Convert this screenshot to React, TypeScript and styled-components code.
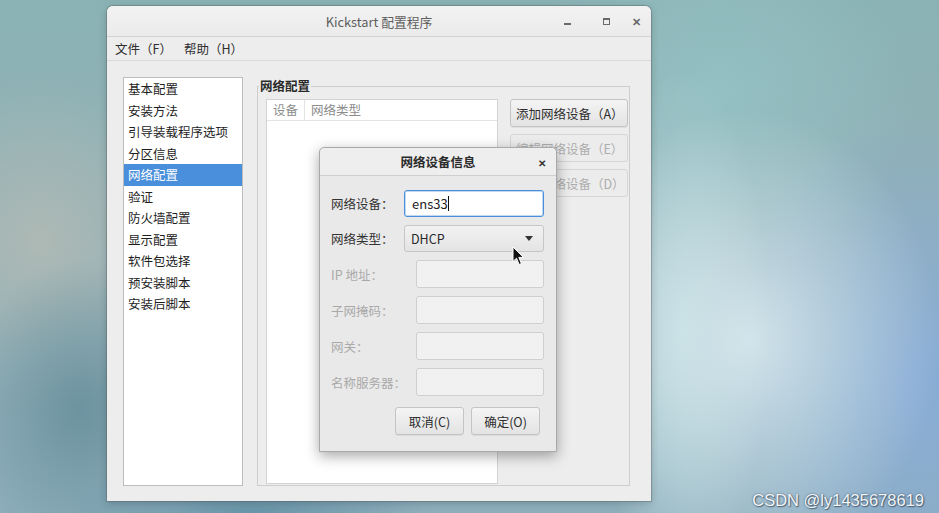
import styled, {createGlobalStyle, css} from "styled-components";

const sections = ['基本配置', '安装方法', '引导装载程序选项', '分区信息', '网络配置', '验证', '防火墙配置', '显示配置', '软件包选择', '预安装脚本', '安装后脚本']

const fields = [
    {label: '网络设备：', kind: 'entry', value: 'ens33'},
    {label: '网络类型：', kind: 'combo', value: 'DHCP'},
    {label: 'IP 地址：', kind: 'off', value: ''},
    {label: '子网掩码：', kind: 'off', value: ''},
    {label: '网关：', kind: 'off', value: ''},
    {label: '名称服务器：', kind: 'off', value: ''},
]

function App() {
    return (
        <Desktop>
            <GlobalStyle/>
            <MainWindow>
                <TitleBar>
                    <Title>Kickstart 配置程序</Title>
                    <Controls>
                        <CtrlMin/>
                        <CtrlMax/>
                        <CtrlClose>✕</CtrlClose>
                    </Controls>
                </TitleBar>
                <MenuBar>
                    <MenuItem>文件（F）</MenuItem>
                    <MenuItem>帮助（H）</MenuItem>
                </MenuBar>
                <Body>
                    <SectionList>
                        {sections.map(s => (
                            <SectionItem key={s} selected={s === '网络配置'}>{s}</SectionItem>
                        ))}
                    </SectionList>
                    <Frame>
                        <Legend>网络配置</Legend>
                        <FrameInner>
                            <DeviceTable>
                                <TableHead>
                                    <HeadCell>设备</HeadCell>
                                    <HeadCell last>网络类型</HeadCell>
                                </TableHead>
                            </DeviceTable>
                            <ActionColumn>
                                <ActionButton>添加网络设备（A）</ActionButton>
                                <ActionButton disabled>编辑网络设备（E）</ActionButton>
                                <ActionButton disabled>删除网络设备（D）</ActionButton>
                            </ActionColumn>
                        </FrameInner>
                    </Frame>
                </Body>
            </MainWindow>

            <Dialog>
                <DialogHeader>
                    <DialogTitle>网络设备信息</DialogTitle>
                    <DialogClose>✕</DialogClose>
                </DialogHeader>
                <DialogBody>
                    <FieldGrid>
                        {fields.map(f => (
                            <FieldRow key={f.label}>
                                <FieldLabel off={f.kind === 'off'}>{f.label}</FieldLabel>
                                {f.kind === 'entry' && (
                                    <Entry>{f.value}<Caret/></Entry>
                                )}
                                {f.kind === 'combo' && (
                                    <Combo>
                                        <span>{f.value}</span>
                                        <ComboArrow/>
                                    </Combo>
                                )}
                                {f.kind === 'off' && <EntryOff/>}
                            </FieldRow>
                        ))}
                    </FieldGrid>
                    <DialogButtons>
                        <DialogButton>取消(C)</DialogButton>
                        <DialogButton>确定(O)</DialogButton>
                    </DialogButtons>
                </DialogBody>
            </Dialog>

            <Pointer width="13" height="20" viewBox="0 0 13 20">
                <path d="M1 1 L1 15.5 L4.5 12.2 L7.2 18.5 L9.4 17.5 L6.8 11.4 L11.5 11.4 Z" fill="#111" stroke="#fff" strokeWidth="1"/>
            </Pointer>

            <Watermark>CSDN @ly1435678619</Watermark>
        </Desktop>
    )
}

export default App

const GlobalStyle = createGlobalStyle`
    html, body {
        margin: 0;
        padding: 0;
        overflow: hidden;
    }
    body {
        font-family: "Noto Sans CJK SC", "Noto Sans", sans-serif;
    }
`

const Desktop = styled.div`
    position: relative;
    width: 939px;
    height: 513px;
    overflow: hidden;
    background:
        radial-gradient(ellipse 190px 230px at 750px 340px, rgba(220, 236, 241, 0.85), rgba(220, 236, 241, 0) 100%),
        radial-gradient(ellipse 90px 260px at 680px 330px, rgba(192, 224, 228, 0.8), rgba(192, 224, 228, 0) 100%),
        radial-gradient(ellipse 220px 260px at 920px 380px, rgba(136, 172, 216, 0.95), rgba(136, 172, 216, 0) 100%),
        radial-gradient(ellipse 180px 60px at 250px 513px, rgba(100, 146, 166, 0.9), rgba(100, 146, 166, 0) 100%),
        radial-gradient(ellipse 120px 150px at 80px 410px, rgba(104, 144, 156, 0.9), rgba(104, 144, 156, 0) 100%),
        radial-gradient(ellipse 150px 170px at 40px 240px, rgba(176, 186, 180, 0.9), rgba(176, 186, 180, 0) 100%),
        radial-gradient(ellipse 200px 180px at 720px 90px, rgba(150, 196, 198, 0.8), rgba(150, 196, 198, 0) 100%),
        linear-gradient(180deg, #8ab2b4 0%, #93b0b8 50%, #8eaebc 100%);
`

const MainWindow = styled.div`
    position: absolute;
    left: 107px;
    top: 6px;
    width: 544px;
    height: 495px;
    display: flex;
    flex-direction: column;
    background: #ededed;
    border-radius: 6px 6px 0 0;
    box-shadow: 0 0 0 1px rgba(80, 90, 90, 0.35), 0 2px 8px rgba(0, 0, 0, 0.2);
    overflow: hidden;
`

const TitleBar = styled.div`
    position: relative;
    height: 30px;
    flex-shrink: 0;
    display: flex;
    align-items: center;
    justify-content: center;
    background: linear-gradient(#f2f2f2, #ebebeb);
    border-bottom: 1px solid #d4d4d4;
`

const Title = styled.div`
    font-size: 12.8px;
    color: #5e5e5e;
`

const Controls = styled.div`
    position: absolute;
    right: 0;
    top: 0;
    height: 30px;
    display: flex;
    align-items: center;
`

const ctrl = css`
    width: 30px;
    height: 30px;
    display: flex;
    justify-content: center;
    align-items: center;
    color: #6a6a6a;
`

const CtrlMin = styled.div`
    ${ctrl};
    margin-right: 9px;
    &::after {
        content: '';
        width: 7px;
        height: 2px;
        margin-top: 6px;
        background: #6a6a6a;
    }
`

const CtrlMax = styled.div`
    ${ctrl};
    &::after {
        content: '';
        width: 5px;
        height: 4px;
        border: 1.5px solid #6a6a6a;
        border-top-width: 2px;
    }
`

const CtrlClose = styled.div`
    ${ctrl};
    font-size: 11px;
    font-weight: 700;
`

const MenuBar = styled.div`
    height: 23px;
    flex-shrink: 0;
    display: flex;
    align-items: center;
    padding-left: 6px;
    gap: 8px;
    border-bottom: 1px solid #dadada;
`

const MenuItem = styled.div`
    font-size: 12.5px;
    color: #2e2e2e;
    padding: 0 2px;
`

const Body = styled.div`
    flex: 1;
    display: flex;
    gap: 14px;
    padding: 16px 21px 15px 16px;
    min-height: 0;
`

const SectionList = styled.div`
    width: 118px;
    background: #fff;
    border: 1px solid #bdbdbd;
    display: flex;
    flex-direction: column;
`

const SectionItem = styled.div<{ selected?: boolean }>`
    height: 21.5px;
    line-height: 21.5px;
    padding-left: 4px;
    font-size: 12.5px;
    color: #1e1e1e;
    white-space: nowrap;

    ${props => props.selected && css`
        background: #4a8fdb;
        color: #fff;
    `}
`

const Frame = styled.fieldset`
    flex: 1;
    margin: 0;
    padding: 3px 1px 1px 8px;
    border: 1px solid #cdcdcd;
    display: flex;
    min-width: 0;
`

const Legend = styled.legend`
    margin-left: -7px;
    padding: 0 1px;
    font-size: 12.5px;
    font-weight: 700;
    color: #2a2a2a;
    line-height: 18px;
`

const FrameInner = styled.div`
    flex: 1;
    display: flex;
    gap: 12px;
    padding-top: 1px;
`

const DeviceTable = styled.div`
    width: 230px;
    background: #fff;
    border: 1px solid #d3d3d3;
    display: flex;
    flex-direction: column;
`

const TableHead = styled.div`
    display: flex;
    height: 20px;
    border-bottom: 1px solid #e3e3e3;
`

const HeadCell = styled.div<{ last?: boolean }>`
    font-size: 12.5px;
    color: #8c8c8c;
    line-height: 20px;
    padding: 0 6px;
    border-right: ${props => props.last ? 'none' : '1px solid #e3e3e3'};
    flex: ${props => props.last ? 1 : 'none'};
`

const ActionColumn = styled.div`
    display: flex;
    flex-direction: column;
    gap: 7px;
    width: 118px;
`

const buttonLook = css`
    height: 28px;
    box-sizing: border-box;
    border: 1px solid #c4c4c4;
    border-radius: 3px;
    background: linear-gradient(#f4f4f4, #e3e3e3);
    box-shadow: 0 1px 0 rgba(0, 0, 0, 0.06);
    font-family: "Noto Sans CJK SC", "Noto Sans", sans-serif;
    font-size: 12.5px;
    color: #2e2e2e;
    padding: 0;
`

const ActionButton = styled.button`
    ${buttonLook};
    width: 118px;
    text-align: left;
    padding-left: 5px;
    white-space: nowrap;

    &:disabled {
        background: #ececec;
        border-color: #d6d6d6;
        color: #adadad;
        box-shadow: none;
    }
`

const Dialog = styled.div`
    position: absolute;
    left: 319px;
    top: 147px;
    width: 238px;
    height: 305px;
    box-sizing: border-box;
    display: flex;
    flex-direction: column;
    background: #e9e9e9;
    border: 1px solid #a9a9a9;
    border-radius: 5px 5px 0 0;
    box-shadow: 0 4px 14px rgba(0, 0, 0, 0.35);
`

const DialogHeader = styled.div`
    position: relative;
    height: 28px;
    display: flex;
    align-items: center;
    justify-content: center;
    background: #eeeeee;
    border-bottom: 1px solid #cfcfcf;
    border-radius: 5px 5px 0 0;
`

const DialogTitle = styled.div`
    font-size: 12.5px;
    font-weight: 700;
    color: #2c2c2c;
`

const DialogClose = styled.div`
    position: absolute;
    right: 10px;
    top: 7px;
    font-size: 10px;
    font-weight: 700;
    color: #333;
`

const DialogBody = styled.div`
    flex: 1;
    display: flex;
    flex-direction: column;
    padding: 14px 12px 16px 11px;
`

const FieldGrid = styled.div`
    display: flex;
    flex-direction: column;
    gap: 8px;
`

const FieldRow = styled.div`
    display: flex;
    align-items: center;
    justify-content: space-between;
`

const FieldLabel = styled.div<{ off?: boolean }>`
    font-size: 12.5px;
    color: ${props => props.off ? '#a9a9a9' : '#333'};
    white-space: nowrap;
`

const Entry = styled.div`
    width: 140px;
    height: 27px;
    box-sizing: border-box;
    border: 1px solid #4a8fdb;
    border-radius: 3px;
    box-shadow: inset 0 0 0 1px rgba(74, 143, 219, 0.35);
    background: #fff;
    display: flex;
    align-items: center;
    padding-left: 7px;
    font-size: 13px;
    color: #222;
`

const Caret = styled.span`
    width: 1px;
    height: 15px;
    background: #111;
`

const Combo = styled.div`
    width: 140px;
    height: 27px;
    box-sizing: border-box;
    border: 1px solid #c6c6c6;
    border-radius: 3px;
    background: linear-gradient(#f2f2f2, #e4e4e4);
    display: flex;
    align-items: center;
    justify-content: space-between;
    padding: 0 10px 0 6px;
    font-size: 12.5px;
    color: #2a2a2a;
`

const ComboArrow = styled.span`
    width: 0;
    height: 0;
    border-left: 4.5px solid transparent;
    border-right: 4.5px solid transparent;
    border-top: 5px solid #333;
`

const EntryOff = styled.div`
    width: 128px;
    height: 28px;
    box-sizing: border-box;
    border: 1px solid #cfcfcf;
    border-radius: 3px;
    background: #f1f1f1;
`

const DialogButtons = styled.div`
    display: flex;
    justify-content: flex-end;
    gap: 7px;
    margin-top: 11px;
    padding-right: 4px;
`

const DialogButton = styled.button`
    ${buttonLook};
    width: 69px;
`

const Pointer = styled.svg`
    position: absolute;
    left: 512px;
    top: 246px;
`

const Watermark = styled.div`
    position: absolute;
    right: 15px;
    bottom: 3px;
    font-family: "Liberation Sans", Arial, sans-serif;
    font-size: 16.5px;
    color: #f4f6f8;
    text-shadow: 0 0 2px rgba(40, 60, 80, 0.8), 1px 1px 1px rgba(40, 60, 80, 0.6);
`
